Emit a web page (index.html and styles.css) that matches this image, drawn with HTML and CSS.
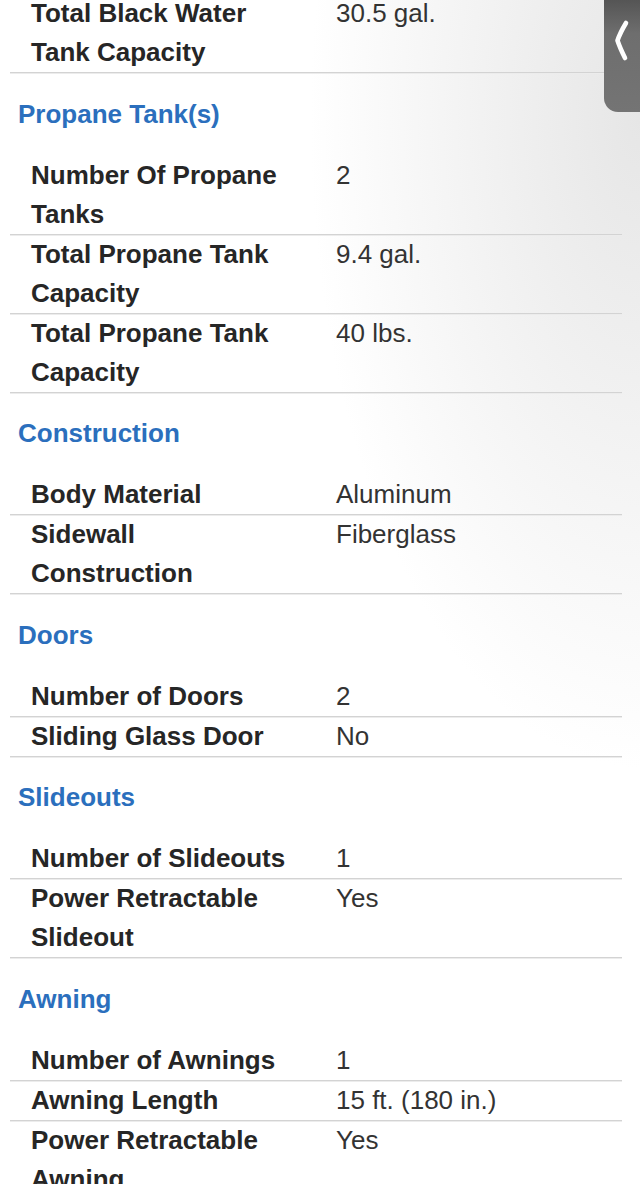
FILE: index.html
```html
<!DOCTYPE html>
<html lang="en">
<head>
<meta charset="utf-8">
<title>Specifications</title>
<link rel="stylesheet" href="styles.css">
</head>
<body>
<main class="specs">
  <div class="row"><div class="label">Total Black Water Tank Capacity</div><div class="value">30.5 gal.</div></div>

  <h2 class="section">Propane Tank(s)</h2>
  <div class="row"><div class="label">Number Of Propane Tanks</div><div class="value">2</div></div>
  <div class="row"><div class="label">Total Propane Tank Capacity</div><div class="value">9.4 gal.</div></div>
  <div class="row"><div class="label">Total Propane Tank Capacity</div><div class="value">40 lbs.</div></div>

  <h2 class="section">Construction</h2>
  <div class="row"><div class="label">Body Material</div><div class="value">Aluminum</div></div>
  <div class="row"><div class="label">Sidewall Construction</div><div class="value">Fiberglass</div></div>

  <h2 class="section">Doors</h2>
  <div class="row"><div class="label">Number of Doors</div><div class="value">2</div></div>
  <div class="row"><div class="label">Sliding Glass Door</div><div class="value">No</div></div>

  <h2 class="section">Slideouts</h2>
  <div class="row"><div class="label">Number of Slideouts</div><div class="value">1</div></div>
  <div class="row"><div class="label">Power Retractable Slideout</div><div class="value">Yes</div></div>

  <h2 class="section">Awning</h2>
  <div class="row"><div class="label">Number of Awnings</div><div class="value">1</div></div>
  <div class="row"><div class="label">Awning Length</div><div class="value">15 ft. (180 in.)</div></div>
  <div class="row"><div class="label">Power Retractable Awning</div><div class="value">Yes</div></div>
</main>

<div class="side-tab" aria-label="Open panel">
  <svg class="chev" width="36" height="80" viewBox="0 0 36 80">
    <path d="M22 23 Q16 33 13.5 40.5 Q16 48 21 58" fill="none" stroke="#fff" stroke-width="4.6" stroke-linecap="round" stroke-linejoin="round"/>
  </svg>
</div>
</body>
</html>
```

FILE: styles.css
```css
html, body {
  margin: 0;
  padding: 0;
}

body {
  width: 640px;
  height: 1184px;
  overflow: hidden;
  font-family: "Liberation Sans", Arial, sans-serif;
  background:
    radial-gradient(ellipse 330px 650px at 100% 10%, #e6e6e6 0%, rgba(255,255,255,0) 100%),
    #ffffff;
}

.specs {
  margin-top: -6px;
}

.row {
  display: grid;
  grid-template-columns: 326px 1fr;
  margin: 0 18px 0 10px;
  border-bottom: 1px solid #d3d3d3;
  box-shadow: 0 1px 0 #ececec;
  font-size: 26px;
  line-height: 39px;
}

.label {
  padding: 0 43px 0 21px;
  font-weight: 700;
  color: #262626;
}

.value {
  color: #333333;
  font-weight: 400;
}

.section {
  margin: 0;
  height: 82.5px;
  display: flex;
  align-items: center;
  padding-left: 18px;
  font-size: 26px;
  font-weight: 700;
  color: #2b6fbd;
}

.side-tab {
  position: absolute;
  top: 0;
  right: 0;
  width: 36px;
  height: 112px;
  border-bottom-left-radius: 14px;
  background: linear-gradient(to bottom, #555555 0%, #6e6e6e 30%, #747474 100%);
}

.chev {
  display: block;
}
```
